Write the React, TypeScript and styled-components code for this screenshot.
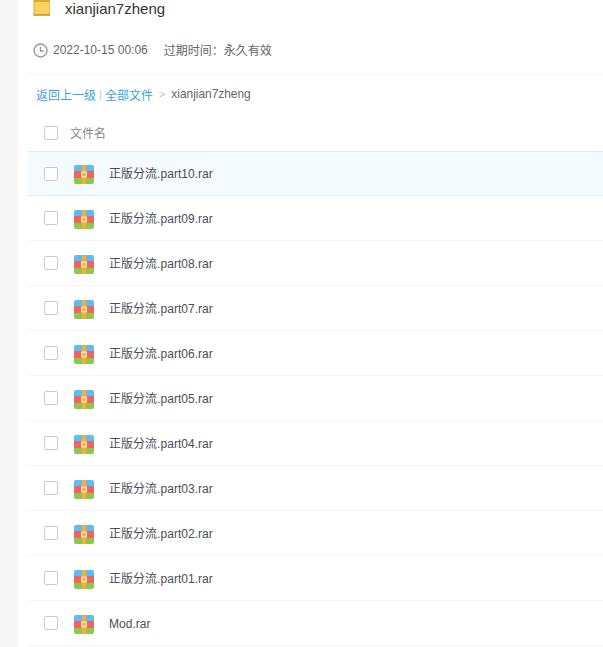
import React from "react";
import styled, { createGlobalStyle } from "styled-components";

const Global = createGlobalStyle`
  html, body { margin: 0; padding: 0; background: #fff; overflow: hidden; height: 647px; }
  body { font-family: "Liberation Sans", "Noto Sans CJK SC", sans-serif; }
`;
const Page = styled.div`display: flex; width: 603px; height: 647px; overflow: hidden; background: #fff;`;
const Gutter = styled.div`width: 18px; flex: none; background: #f7f7f7;`;
const Main = styled.div`flex: 1; padding-left: 10px; min-width: 0;`;
const TitleRow = styled.div`display: flex; align-items: center; height: 16px; padding-left: 5px; gap: 14px;`;
const Title = styled.div`font-size: 15px; color: #333; line-height: 16px; padding-top: 2px;`;
const MetaRow = styled.div`
  display: flex; align-items: center; margin-top: 25px; height: 18px; padding-left: 5px;
  font-size: 12px; color: #666;
`;
const MetaDate = styled.span`margin-left: 5px;`;
const MetaExpire = styled.span`margin-left: 16px; margin-top: -2px;`;
const Divider = styled.div`height: 1px; background: #f6f6f6; margin-top: 15px;`;
const Crumbs = styled.div`display: flex; align-items: center; height: 18px; margin-top: 10px; padding-left: 8px; font-size: 12px; color: #666;`;
const CrumbLink = styled.a`color: #3aa1e0; text-decoration: none;`;
const CrumbSep = styled.span<{ $light?: boolean }>`color: ${p => (p.$light ? "#c4c4c4" : "#a9cfe8")}; margin: 0 ${p => (p.$light ? "6px" : "3px")}; font-size: 11px;`;
const CrumbCurrent = styled.span`font-size: 11.9px;`;
const HeadRow = styled.div`display: flex; align-items: center; height: 36px; margin-top: 12px; padding-left: 16px; font-size: 12px; color: #888; gap: 12px;`;
const HeadLabel = styled.span`margin-top: -2px;`;
const Box = styled.span`
  display: block; flex: none; width: 12px; height: 12px; border: 1px solid #c9cbd0; border-radius: 2px; background: #fff;
`;
const Row = styled.div<{ $active?: boolean }>`
  display: flex; align-items: center; height: 44px; padding-left: 16px;
  border-bottom: 1px solid ${p => (p.$active ? "#d8ebf7" : "#f4f4f4")};
  ${p => p.$active ? "border-top: 1px solid #d8ebf7; height: 43px; background: #f4fafe;" : ""}
`;
const IconSlot = styled.span`display: flex; margin: 2px 15px 0 16px;`;
const Name = styled.span<{ $cjk: boolean }>`
  font-size: 12px; color: #4a4d57; letter-spacing: 0.03px;
  margin-top: ${p => (p.$cjk ? "-2px" : "2px")};
`;

const Folder = () => (
  <svg width="18" height="16" viewBox="0 0 18 16">
    <path d="M0.5 0 H17 V15.5 H0.5 Z" fill="#dca92f" />
    <rect x="1.5" y="2" width="15" height="12.5" fill="#fbd25f" />
    <path d="M0.5 14.5 H17 V15.5 H0.5 Z" fill="#a9842c" />
  </svg>
);
const Clock = () => (
  <svg width="15" height="15" viewBox="0 0 15 15" fill="none" stroke="#999" strokeWidth="1.4">
    <circle cx="7.5" cy="7.5" r="6.5" />
    <path d="M7.5 3.8 V8 H10.6" strokeWidth="1.3" />
  </svg>
);
const Rar = () => (
  <svg width="20" height="19" viewBox="0 0 20 19">
    <defs>
      <clipPath id="rarclip"><rect width="20" height="19" rx="2" /></clipPath>
    </defs>
    <g clipPath="url(#rarclip)">
      <rect width="20" height="6" fill="#5cbdf0" />
      <rect y="6" width="20" height="7" fill="#f0635f" />
      <rect y="13" width="20" height="6" fill="#8cc84b" />
      <rect x="8" width="4" height="19" fill="#f6ad3b" />
      <rect x="7" y="6.5" width="6" height="6" fill="#fbe3a6" />
      <rect x="8.5" y="8" width="3" height="3" fill="#f6ad3b" />
    </g>
  </svg>
);

const files = ["10", "09", "08", "07", "06", "05", "04", "03", "02", "01"].map(n => `正版分流.part${n}.rar`).concat("Mod.rar");

export default function App() {
  return (
    <Page>
      <Global />
      <Gutter />
      <Main>
        <TitleRow>
          <Folder />
          <Title>xianjian7zheng</Title>
        </TitleRow>
        <MetaRow>
          <Clock />
          <MetaDate>2022-10-15 00:06</MetaDate>
          <MetaExpire>过期时间：永久有效</MetaExpire>
        </MetaRow>
        <Divider />
        <Crumbs>
          <CrumbLink>返回上一级</CrumbLink>
          <CrumbSep>|</CrumbSep>
          <CrumbLink>全部文件</CrumbLink>
          <CrumbSep $light>&gt;</CrumbSep>
          <CrumbCurrent>xianjian7zheng</CrumbCurrent>
        </Crumbs>
        <HeadRow>
          <Box />
          <HeadLabel>文件名</HeadLabel>
        </HeadRow>
        {files.map((f, i) => (
          <Row key={f} $active={i === 0}>
            <Box />
            <IconSlot><Rar /></IconSlot>
            <Name $cjk={f !== "Mod.rar"}>{f}</Name>
          </Row>
        ))}
      </Main>
    </Page>
  );
}
